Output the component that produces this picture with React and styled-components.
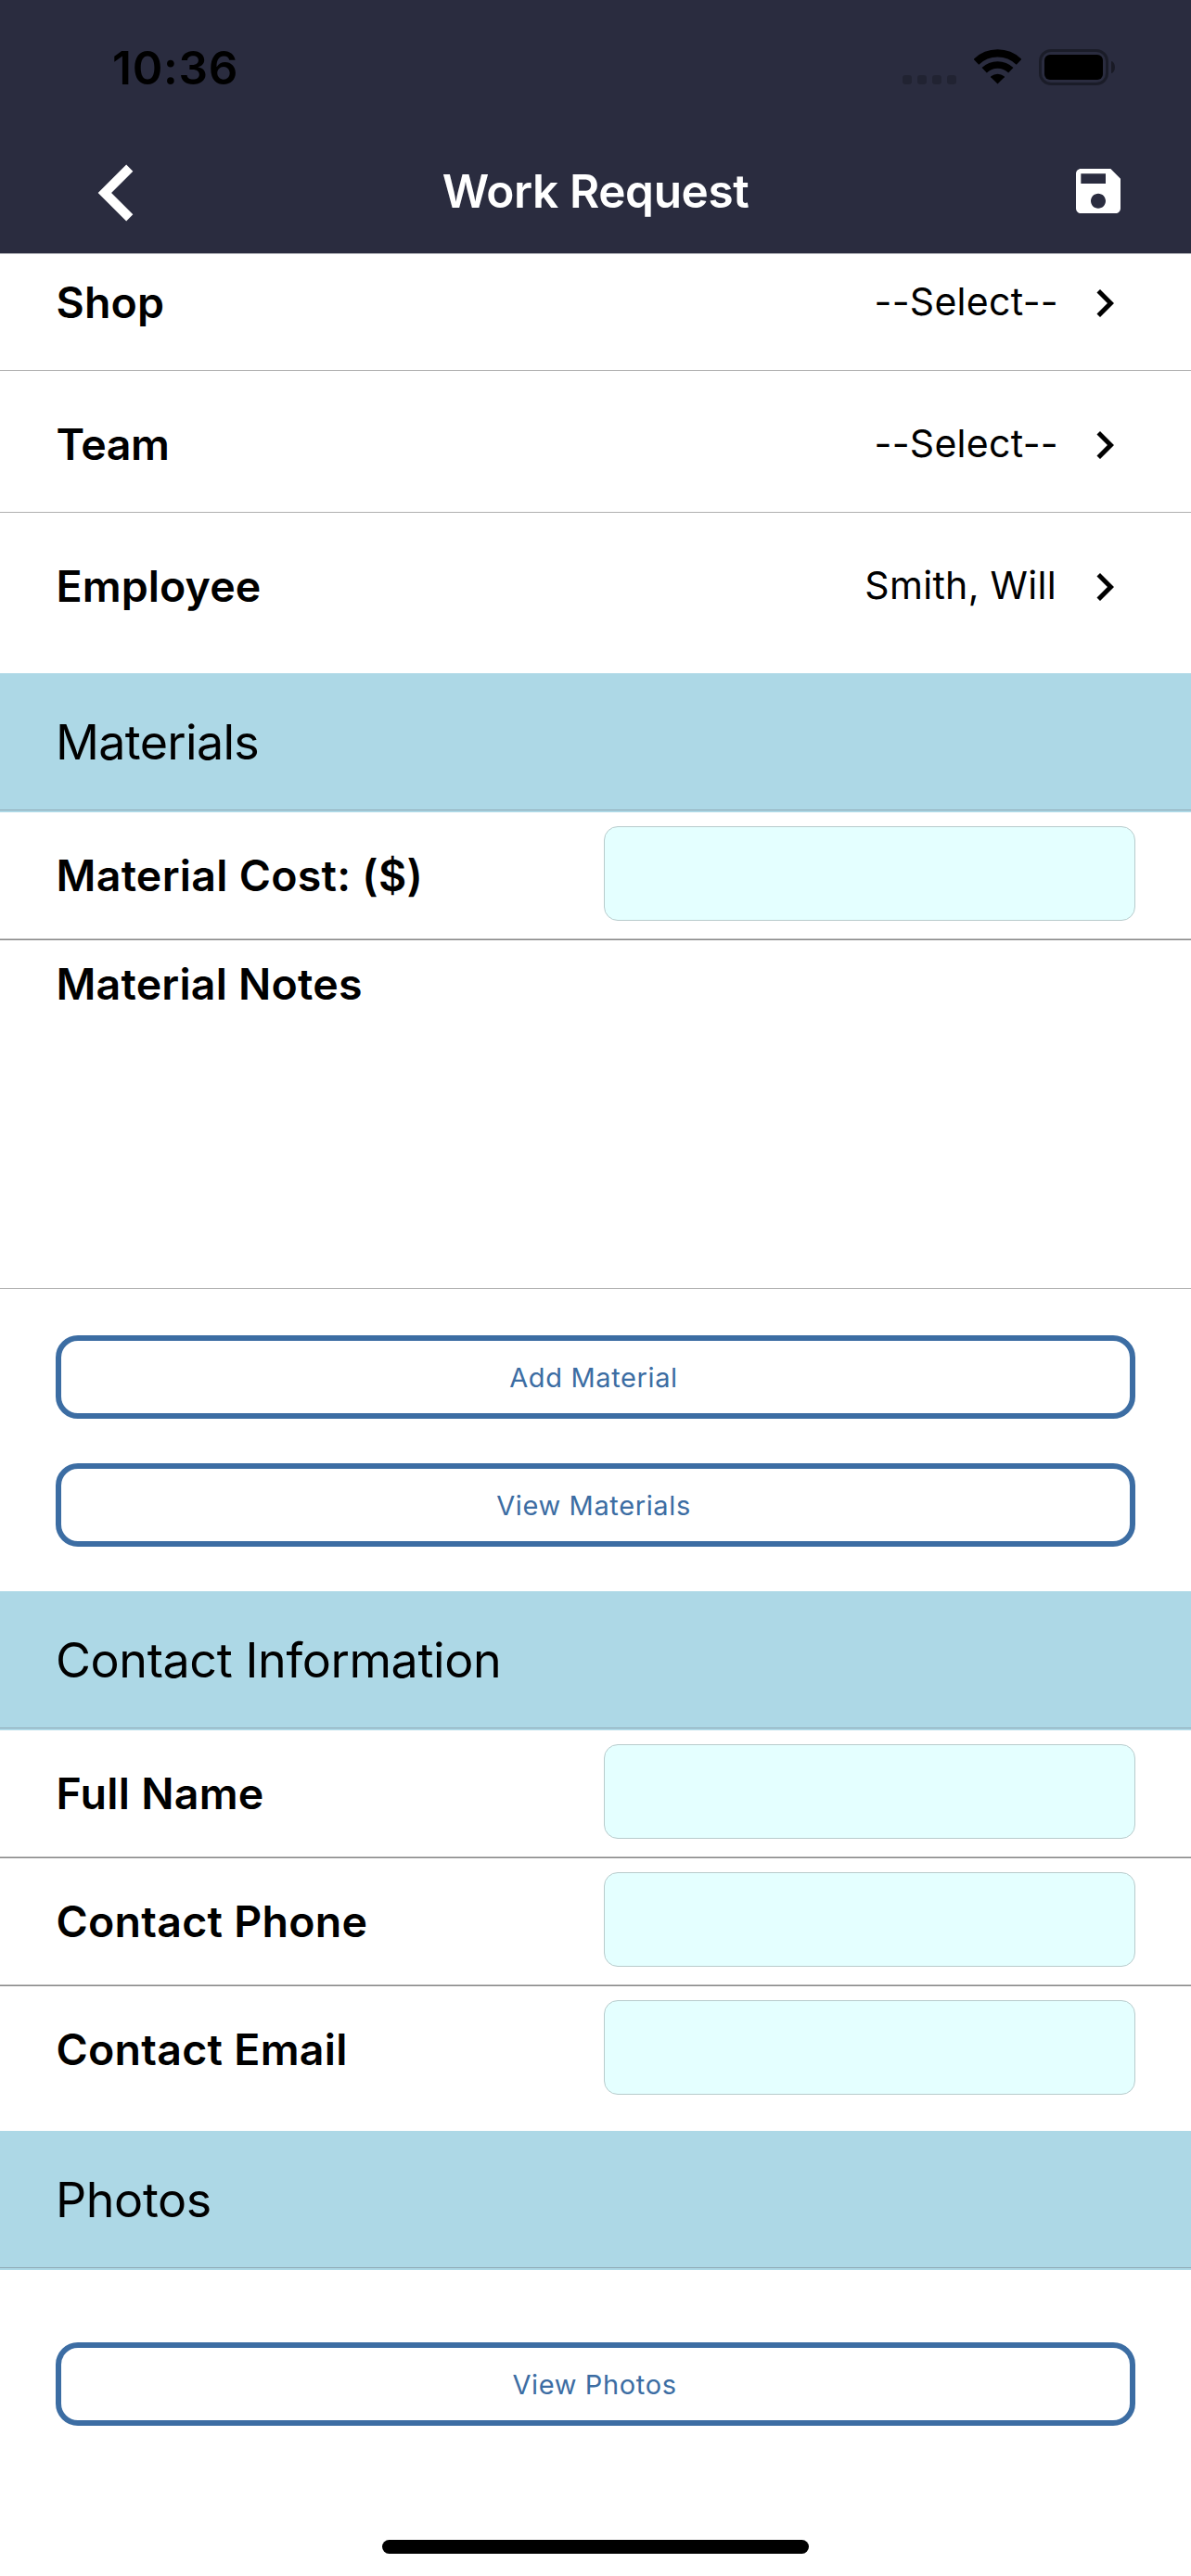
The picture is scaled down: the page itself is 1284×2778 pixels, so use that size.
import React from "react";
import styled, { createGlobalStyle } from "styled-components";

const GlobalStyle = createGlobalStyle`
  *, *::before, *::after { box-sizing: border-box; }
  body {
    margin: 0;
    background: #fff;
    color: #000;
    font-family: Inter, "Liberation Sans", sans-serif;
  }
`;

const Screen = styled.div`
  display: flex;
  flex-direction: column;
  width: 1284px;
  height: 2778px;
  overflow: hidden;
  background: #fff;
`;

const Header = styled.header`
  height: 274px;
  background: #2a2c3f;
  border-bottom: 1px solid #b1b2b8;
`;

const StatusBar = styled.div`
  display: flex;
  justify-content: space-between;
  align-items: flex-start;
  height: 142px;
  padding: 43px 82px 0 121px;
`;

const Clock = styled.span`
  font-size: 49.5px;
  font-weight: 600;
  line-height: 60px;
  letter-spacing: 0.75px;
`;

const StatusIcons = styled.div`
  display: flex;
  align-items: flex-end;
  margin-top: 10px;
  height: 39px;
`;

const SignalDots = styled.div`
  display: flex;
  gap: 6px;
  margin: 0 19px 1px 0;
`;

const Dot = styled.i`
  width: 10px;
  height: 10px;
  border-radius: 3px;
  background: rgba(0, 0, 0, 0.2);
`;

const WifiSvg = styled.svg`
  display: block;
  width: 51px;
  height: 38px;
  margin: 0 19px 1px 0;
`;

const BatteryCase = styled.div`
  width: 75px;
  height: 39px;
  padding: 3px;
  border: 3px solid rgba(0, 0, 0, 0.36);
  border-radius: 13px;
`;

const BatteryLevel = styled.div`
  width: 63px;
  height: 27px;
  border-radius: 6px;
  background: #000;
`;

const BatteryTip = styled.div`
  width: 4px;
  height: 13px;
  margin: 0 0 13px 3px;
  border-radius: 0 4px 4px 0 / 0 6.5px 6.5px 0;
  background: rgba(0, 0, 0, 0.4);
`;

const NavBar = styled.nav`
  display: grid;
  grid-template-columns: 200px 1fr 200px;
  align-items: center;
  height: 131px;
  color: #fff;
`;

const NavButton = styled.button`
  display: flex;
  justify-content: ${(p) => (p.$end ? "flex-end" : "flex-start")};
  padding: ${(p) => (p.$end ? "0 68px 3px 0" : "0 0 0 65px")};
  border: 0;
  background: none;
  color: inherit;
`;

const Title = styled.h1`
  margin: 0 0 3px;
  font-size: 49.5px;
  font-weight: 600;
  line-height: 60px;
  letter-spacing: -0.38px;
  text-align: center;
`;

const Icon = styled.svg`
  display: block;
  flex: none;
  width: ${(p) => p.$size}px;
  height: ${(p) => p.$size}px;
  fill: currentColor;
`;

const PickerRow = styled.div`
  display: flex;
  align-items: flex-end;
  height: ${(p) => p.$height}px;
  padding: 0 63px 42px 60.5px;
  border-bottom: ${(p) => (p.$last ? "0" : "1px solid #b0b0b0")};
  margin-bottom: ${(p) => (p.$last ? "21px" : "0")};
`;

const Label = styled.span`
  flex: 1;
  font-size: 46.5px;
  font-weight: 600;
  line-height: 60px;
  letter-spacing: ${(p) => p.$spacing ?? 0.27}px;
`;

const PickerLabel = styled(Label)`
  margin-bottom: 1px;
`;

const Value = styled.span`
  margin: 0 ${(p) => p.$gap}px 2px 0;
  font-size: 41px;
  line-height: 60px;
  letter-spacing: 0.3px;
`;

const SectionHeader = styled.h2`
  height: 150px;
  margin: 0;
  background: #add8e6;
  border-bottom: 2px solid #add8e6;
`;

const SectionTitle = styled.span`
  display: block;
  height: 148px;
  padding: 1px 0 0 60px;
  border-bottom: 1px solid #8fa9b5;
  font-size: 52px;
  font-weight: 400;
  line-height: 147px;
  letter-spacing: ${(p) => p.$spacing}px;
`;

const FieldRow = styled.label`
  display: flex;
  align-items: flex-start;
  height: ${(p) => (p.$last ? 156 : 138)}px;
  padding: 15px 60px 0 60.5px;
  border-bottom: ${(p) => (p.$last ? "0" : "1px solid #888")};
  box-shadow: ${(p) => (p.$last ? "none" : "inset 0 -1px 0 #bbb")};
`;

const FieldLabel = styled(Label)`
  line-height: 106px;
`;

const Input = styled.input`
  width: 573px;
  height: 102px;
  padding: 0 20px;
  border: 1px solid #b8cbcc;
  border-radius: 15px;
  background: #e4ffff;
  font: 400 41px Inter, sans-serif;
  outline: none;
`;

const Notes = styled.div`
  display: flex;
  height: 376px;
  padding: 17px 60px 0 60.5px;
  border-bottom: 1px solid #b0b0b0;
`;

const Actions = styled.div`
  display: flex;
  flex-direction: column;
  gap: 48px;
  padding: ${(p) => p.$top}px 60px 48px;
`;

const ActionButton = styled.button`
  height: 90px;
  padding: 1px ${(p) => p.$inset ?? 4}px 0 0;
  border: 6px solid #3c6da3;
  border-radius: 24px;
  background: #fff;
  color: #3c6da3;
  font: 400 29px/40px Inter, "Liberation Sans", sans-serif;
  letter-spacing: 0.63px;
`;

const HomeIndicator = styled.div`
  width: 460px;
  height: 15px;
  margin: auto auto 24px;
  border-radius: 8px;
  background: #000;
`;

const Wifi = () => (
  <WifiSvg viewBox="0 0 51 38" fill="none" stroke="#000">
    <path d="M2.4 13.8A33.1 33.1 0 0 1 48.6 13.8" strokeWidth="8.2" />
    <path d="M11.2 22.8A20.5 20.5 0 0 1 39.8 22.8" strokeWidth="7.6" />
    <path
      d="M25.5 37.6 18.2 30.2Q17.8 29.7 18.4 29.2A11.2 11.2 0 0 1 32.6 29.2Q33.2 29.7 32.8 30.2Z"
      fill="#000"
      stroke="none"
    />
  </WifiSvg>
);

const ChevronLeft = () => (
  <Icon $size={122} viewBox="0 0 24 24">
    <path d="M15.41 7.41 14 6l-6 6 6 6 1.41-1.41L10.83 12z" />
  </Icon>
);

const ChevronRight = () => (
  <Icon $size={60} viewBox="0 0 24 24">
    <path d="M10 6 8.59 7.41 13.17 12l-4.58 4.59L10 18l6-6z" />
  </Icon>
);

const Save = () => (
  <Icon $size={64} viewBox="0 0 24 24">
    <path d="M17 3H5c-1.11 0-2 .9-2 2v14c0 1.1.89 2 2 2h14c1.1 0 2-.9 2-2V7l-4-4zm-5 16c-1.66 0-3-1.34-3-3s1.34-3 3-3 3 1.34 3 3-1.34 3-3 3zm3-10H5V5h10v4z" />
  </Icon>
);

const Picker = ({ label, value, spacing, gap = 20, height = 153, last }) => (
  <PickerRow $height={height} $last={last}>
    <PickerLabel $spacing={spacing}>{label}</PickerLabel>
    <Value $gap={gap}>{value}</Value>
    <ChevronRight />
  </PickerRow>
);

const Section = ({ title, spacing }) => (
  <SectionHeader>
    <SectionTitle $spacing={spacing}>{title}</SectionTitle>
  </SectionHeader>
);

const Field = ({ label, last }) => (
  <FieldRow $last={last}>
    <FieldLabel>{label}</FieldLabel>
    <Input />
  </FieldRow>
);

export default function App() {
  return (
    <>
      <GlobalStyle />
      <Screen>
        <Header>
          <StatusBar>
            <Clock>10:36</Clock>
            <StatusIcons>
              <SignalDots>
                <Dot />
                <Dot />
                <Dot />
                <Dot />
              </SignalDots>
              <Wifi />
              <BatteryCase>
                <BatteryLevel />
              </BatteryCase>
              <BatteryTip />
            </StatusIcons>
          </StatusBar>
          <NavBar>
            <NavButton aria-label="Back">
              <ChevronLeft />
            </NavButton>
            <Title>Work Request</Title>
            <NavButton $end aria-label="Save">
              <Save />
            </NavButton>
          </NavBar>
        </Header>

        <Picker label="Shop" value="--Select--" spacing={0.15} height={126} />
        <Picker label="Team" value="--Select--" spacing={-0.4} />
        <Picker label="Employee" value="Smith, Will" spacing={0.08} gap={22} height={152} last />

        <Section title="Materials" spacing={-0.68} />
        <Field label="Material Cost: ($)" />
        <Notes>
          <Label $spacing={0.2}>Material Notes</Label>
        </Notes>
        <Actions $top={50}>
          <ActionButton>Add Material</ActionButton>
          <ActionButton>View Materials</ActionButton>
        </Actions>

        <Section title="Contact Information" spacing={-0.4} />
        <Field label="Full Name" />
        <Field label="Contact Phone" />
        <Field label="Contact Email" last />

        <Section title="Photos" spacing={-0.42} />
        <Actions $top={78}>
          <ActionButton $inset={2}>View Photos</ActionButton>
        </Actions>
        <HomeIndicator />
      </Screen>
    </>
  );
}
